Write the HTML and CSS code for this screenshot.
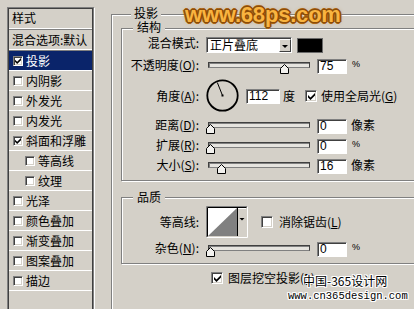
FILE: index.html
```html
<!DOCTYPE html>
<html lang="zh-CN">
<head>
<meta charset="utf-8">
<title>图层样式</title>
<link rel="stylesheet" href="styles.css">
</head>
<body>
<div class="dialog">
  <div class="style-list">
    <div class="list-head list-head-first">样式</div>
    <div class="list-head">混合选项:默认</div>
    <div class="item selected"><span class="cb cb-small"><svg class="check" width="7" height="7" viewBox="0 0 7 7"><polygon points="0,2 2.5,4.5 7,0 7,2.5 2.5,7 0,4.5"/></svg></span>投影</div>
    <div class="item"><span class="cb cb-small"></span>内阴影</div>
    <div class="item"><span class="cb cb-small"></span>外发光</div>
    <div class="item"><span class="cb cb-small"></span>内发光</div>
    <div class="item"><span class="cb cb-small"><svg class="check" width="7" height="7" viewBox="0 0 7 7"><polygon points="0,2 2.5,4.5 7,0 7,2.5 2.5,7 0,4.5"/></svg></span>斜面和浮雕</div>
    <div class="item sub"><span class="cb cb-small"></span>等高线</div>
    <div class="item sub"><span class="cb cb-small"></span>纹理</div>
    <div class="item"><span class="cb cb-small"></span>光泽</div>
    <div class="item"><span class="cb cb-small"></span>颜色叠加</div>
    <div class="item"><span class="cb cb-small"></span>渐变叠加</div>
    <div class="item"><span class="cb cb-small"></span>图案叠加</div>
    <div class="item"><span class="cb cb-small"></span>描边</div>
  </div>

  <div class="panel">
    <div class="group group-outer">
      <div class="legend legend-outer">投影</div>

      <div class="group group-inner">
        <div class="legend legend-inner">结构</div>

        <div class="row row-blend">
          <span class="label label-short">混合模式:</span>
          <div class="select">
            <span class="select-text">正片叠底</span>
            <span class="select-btn"><span class="arrow"></span></span>
          </div>
          <span class="swatch"></span>
        </div>

        <div class="row row-opacity">
          <span class="label label-short">不透明度(<u>O</u>):</span>
          <div class="slider"><div class="track"></div><svg class="thumb" style="left:74px" width="9" height="10" viewBox="0 0 9 10"><polygon points="0.5,9.5 0.5,4.5 4.5,0.5 8.5,4.5 8.5,9.5" fill="#f2f1ee" stroke="#000"/></svg></div>
          <span class="num">75</span>
          <span class="pct">%</span>
        </div>

        <div class="row row-angle">
          <span class="label">角度(<u>A</u>):</span>
          <svg class="dial" width="33" height="33" viewBox="0 0 33 33"><circle cx="16.5" cy="16.5" r="15.2" fill="none" stroke="#000" stroke-width="1.8"/><line x1="16.5" y1="16.5" x2="11.3" y2="3.5" stroke="#000" stroke-width="1"/><rect x="15.5" y="15.5" width="2" height="2"/></svg>
          <span class="num num-angle">112</span>
          <span class="unit-deg">度</span>
          <span class="cb cb-global"><svg class="check" width="7" height="7" viewBox="0 0 7 7"><polygon points="0,2 2.5,4.5 7,0 7,2.5 2.5,7 0,4.5"/></svg></span>
          <span class="cb-text">使用全局光(<u>G</u>)</span>
        </div>

        <div class="row row-short">
          <span class="label label-short">距离(<u>D</u>):</span>
          <div class="slider"><div class="track"></div><svg class="thumb" style="left:0px" width="9" height="10" viewBox="0 0 9 10"><polygon points="0.5,9.5 0.5,4.5 4.5,0.5 8.5,4.5 8.5,9.5" fill="#f2f1ee" stroke="#000"/></svg></div>
          <span class="num">0</span>
          <span class="unit unit-short">像素</span>
        </div>

        <div class="row row-short">
          <span class="label label-short">扩展(<u>R</u>):</span>
          <div class="slider"><div class="track"></div><svg class="thumb" style="left:0px" width="9" height="10" viewBox="0 0 9 10"><polygon points="0.5,9.5 0.5,4.5 4.5,0.5 8.5,4.5 8.5,9.5" fill="#f2f1ee" stroke="#000"/></svg></div>
          <span class="num">0</span>
          <span class="pct">%</span>
        </div>

        <div class="row row-short">
          <span class="label label-short">大小(<u>S</u>):</span>
          <div class="slider"><div class="track"></div><svg class="thumb" style="left:11px" width="9" height="10" viewBox="0 0 9 10"><polygon points="0.5,9.5 0.5,4.5 4.5,0.5 8.5,4.5 8.5,9.5" fill="#f2f1ee" stroke="#000"/></svg></div>
          <span class="num">16</span>
          <span class="unit unit-short">像素</span>
        </div>
      </div>

      <div class="group group-inner group-quality">
        <div class="legend legend-inner">品质</div>

        <div class="row row-contour">
          <span class="label">等高线:</span>
          <svg class="contour" width="42" height="32" viewBox="0 0 42 32">
            <rect x="0" y="0" width="42" height="32" fill="#d4d0c8"/>
            <rect x="2" y="2" width="29" height="28" fill="#fff"/>
            <polygon points="2,30 31,2 31,30" fill="#808080"/>
            <rect x="31" y="2" width="9" height="28" fill="#d4d0c8"/>
            <line x1="31.5" y1="2" x2="31.5" y2="30" stroke="#000"/>
            <line x1="32" y1="2.5" x2="40" y2="2.5" stroke="#fff"/>
            <polygon points="33.5,12 38.5,12 36,14.5" fill="#000"/>
            <path d="M0.5 31.5 V0.5 H41.5" fill="none" stroke="#808080"/>
            <path d="M1.5 30.5 V1.5 H40.5" fill="none" stroke="#000"/>
            <path d="M0.5 31.5 H41.5 V0.5" fill="none" stroke="#fff"/>
          </svg>
          <span class="cb cb-aa"></span>
          <span class="cb-text">消除锯齿(<u>L</u>)</span>
        </div>

        <div class="row row-noise">
          <span class="label label-short">杂色(<u>N</u>):</span>
          <div class="slider"><div class="track"></div><svg class="thumb" style="left:0px" width="9" height="10" viewBox="0 0 9 10"><polygon points="0.5,9.5 0.5,4.5 4.5,0.5 8.5,4.5 8.5,9.5" fill="#f2f1ee" stroke="#000"/></svg></div>
          <span class="num">0</span>
          <span class="pct">%</span>
        </div>
      </div>

      <div class="knockout">
        <span class="cb"><svg class="check" width="7" height="7" viewBox="0 0 7 7"><polygon points="0,2 2.5,4.5 7,0 7,2.5 2.5,7 0,4.5"/></svg></span>
        <span class="knockout-text">图层挖空投影(<u>F</u>)</span>
      </div>
    </div>
  </div>
</div>

<div class="wm-68ps">www.68ps.com</div>
<div class="wm-cn">
  <div class="wm-cn-title">中国-365设计网</div>
  <div class="wm-cn-url">www.cn365design.com</div>
</div>
</body>
</html>
```

FILE: styles.css
```css
* { box-sizing: border-box; }
html, body { margin: 0; padding: 0; }
body {
  width: 414px;
  height: 309px;
  overflow: hidden;
  position: relative;
  background: #d4d0c8;
  font-family: "Noto Sans CJK SC", "Noto Sans CJK JP", sans-serif;
  font-size: 12px;
  line-height: 14px;
  color: #000;
}
u { text-decoration: underline; text-underline-offset: 1px; }

.dialog { display: flex; align-items: flex-start; }

/* ---------- style list ---------- */
.style-list {
  flex: none;
  width: 85px;
  height: 330px;
  margin: 8px 0 0 8px;
  border: 1px solid #404040;
  outline: 1px solid #808080;
  box-shadow: 2px 0 0 #fff;
}
.list-head {
  height: 21px;
  padding-left: 3px;
  display: flex;
  align-items: center;
  border-bottom: 1px solid #808080;
  box-shadow: inset 0 -1px 0 #fff;
  white-space: nowrap;
}
.list-head-first { padding-bottom: 3px; }
.item {
  height: 20px;
  display: flex;
  align-items: center;
  gap: 3px;
  padding-left: 4px;
  border-bottom: 1px solid #fff;
  white-space: nowrap;
}
.item.sub { padding-left: 16px; }
.item.selected { background: #0a246a; color: #fff; }

/* ---------- checkboxes ---------- */
.cb {
  flex: none;
  width: 12px;
  height: 12px;
  display: flex;
  align-items: center;
  justify-content: center;
  background: #fff;
  border: 1px solid;
  border-color: #808080 #fff #fff #808080;
  box-shadow: inset 1px 1px 0 #404040, inset -1px -1px 0 #d4d0c8;
}
.cb-small { width: 10px; height: 10px; }
.check { display: block; fill: #000; }
.cb-small .check { width: 6px; height: 6px; }

/* ---------- group boxes ---------- */
.panel { flex: none; margin-left: 18px; }
.group {
  border: 1px solid #808080;
  box-shadow: inset 1px 1px 0 #fff, 1px 1px 0 #fff;
}
.group-outer {
  width: 320px;
  height: 320px;
  margin-top: 14px;
  padding-left: 9px;
}
.group-inner {
  width: 300px;
  margin-top: 8px;
  padding-bottom: 6px;
}
.group-quality { margin-top: 16px; }
.legend {
  width: fit-content;
  height: 14px;
  background: #d4d0c8;
  white-space: nowrap;
}
.legend-outer { margin: -9px 0 0 10px; padding: 0 3px; }
.legend-inner { margin: -9px 0 0 11px; padding: 0 4px; }
.group-quality .legend-inner { margin-top: -8px; }

/* ---------- rows ---------- */
.row {
  display: flex;
  align-items: center;
  height: 15px;
  margin-top: 5px;
  white-space: nowrap;
}
.row-blend { height: 16px; margin-top: 3px; }
.row-opacity { margin-top: 6px; }
.row-angle { height: 34px; margin-top: 5px; align-items: flex-start; }
.row-angle + .row-short { margin-top: 6px; }
.row-contour { height: 32px; margin-top: 2px; }
.row-noise { margin-top: 4px; }

.label {
  flex: none;
  width: 77px;
  margin-right: 7px;
  text-align: right;
}
.label-short { align-self: flex-start; margin-top: -1px; }
.row-angle .label { margin-top: 10px; }

/* select */
.select {
  flex: none;
  width: 86px;
  height: 16px;
  display: flex;
  background: #fff;
  border: 1px solid;
  border-color: #808080 #fff #fff #808080;
  box-shadow: inset 1px 1px 0 #404040;
}
.select-text { flex: 1; padding-left: 3px; line-height: 13px; }
.select-btn {
  flex: none;
  width: 12px;
  height: 13px;
  margin: 1px 0 0 0;
  display: flex;
  align-items: center;
  justify-content: center;
  background: #d4d0c8;
  border: 1px solid;
  border-color: #fff #404040 #404040 #fff;
}
.arrow {
  width: 0;
  height: 0;
  margin-top: 2px;
  border-left: 3px solid transparent;
  border-right: 3px solid transparent;
  border-top: 3px solid #000;
}
.swatch {
  flex: none;
  width: 26px;
  height: 15px;
  margin-left: 5px;
  background: #000;
  border: 1px solid #6a6a6a;
}

/* slider */
.slider {
  flex: none;
  position: relative;
  width: 104px;
  height: 15px;
  align-self: flex-start;
}
.track {
  height: 6px;
  margin: 3px 0 0 2px;
  background: #e6e4df;
  border: 1px solid;
  border-color: #404040 #404040 #808080 #404040;
  box-shadow: inset 1px 1px 0 #808080;
}
.thumb { position: absolute; top: 5px; display: block; }

/* numeric field */
.num {
  flex: none;
  width: 30px;
  height: 15px;
  margin-left: 7px;
  padding-left: 2px;
  background: #fff;
  border: 1px solid;
  border-color: #808080 #fff #fff #808080;
  box-shadow: inset 1px 1px 0 #404040;
  font-family: "Liberation Sans", sans-serif;
  font-size: 12px;
  line-height: 13px;
}
.pct {
  align-self: flex-start;
  margin: 1px 0 0 5px;
  font-family: "Liberation Sans", sans-serif;
  font-size: 9px;
  line-height: 9px;
}
.unit { margin-left: 4px; }
.unit-short { align-self: flex-start; margin-top: -1px; }

/* angle row */
.dial { flex: none; display: block; }
.num-angle { width: 34px; margin-top: 10px; }
.unit-deg { margin: 10px 0 0 3px; }
.cb-global { margin: 11px 0 0 10px; }
.row-angle .cb-text { margin: 10px 0 0 4px; }

/* quality */
.contour { flex: none; display: block; }
.cb-aa { margin-left: 13px; }
.row-contour .cb-text { margin-left: 6px; }

.knockout {
  display: flex;
  align-items: center;
  height: 14px;
  margin-top: 7px;
  padding-left: 90px;
  white-space: nowrap;
}
.knockout-text { margin-left: 5px; }

/* ---------- watermarks (overlays) ---------- */
.wm-68ps {
  position: absolute;
  left: 185px;
  top: 4px;
  font-family: "Liberation Sans", sans-serif;
  font-weight: bold;
  font-size: 22px;
  line-height: 22px;
  letter-spacing: -0.2px;
  color: #f9b440;
  text-shadow:
    1px 0 0 #8c4c08, -1px 0 0 #8c4c08, 0 1px 0 #8c4c08, 0 -1px 0 #8c4c08,
    1px 1px 0 #8c4c08, -1px -1px 0 #8c4c08, 1px -1px 0 #8c4c08, -1px 1px 0 #8c4c08,
    2px 0 0 #a86414, -2px 0 0 #a86414, 0 2px 0 #a86414, 0 -2px 0 #a86414,
    0 0 4px #c08a40;
  white-space: nowrap;
}
.wm-cn {
  position: absolute;
  left: 288px;
  top: 273px;
  color: #000;
  white-space: nowrap;
  text-shadow:
    1px 0 0 #fff, -1px 0 0 #fff, 0 1px 0 #fff, 0 -1px 0 #fff,
    1px 1px 0 #fff, -1px -1px 0 #fff, 1px -1px 0 #fff, -1px 1px 0 #fff;
}
.wm-cn-title {
  margin-left: 15px;
  font-size: 12px;
  line-height: 15px;
}
.wm-cn-url {
  font-family: "Liberation Mono", monospace;
  font-size: 10.5px;
  line-height: 12px;
  margin-top: 2px;
}
```
